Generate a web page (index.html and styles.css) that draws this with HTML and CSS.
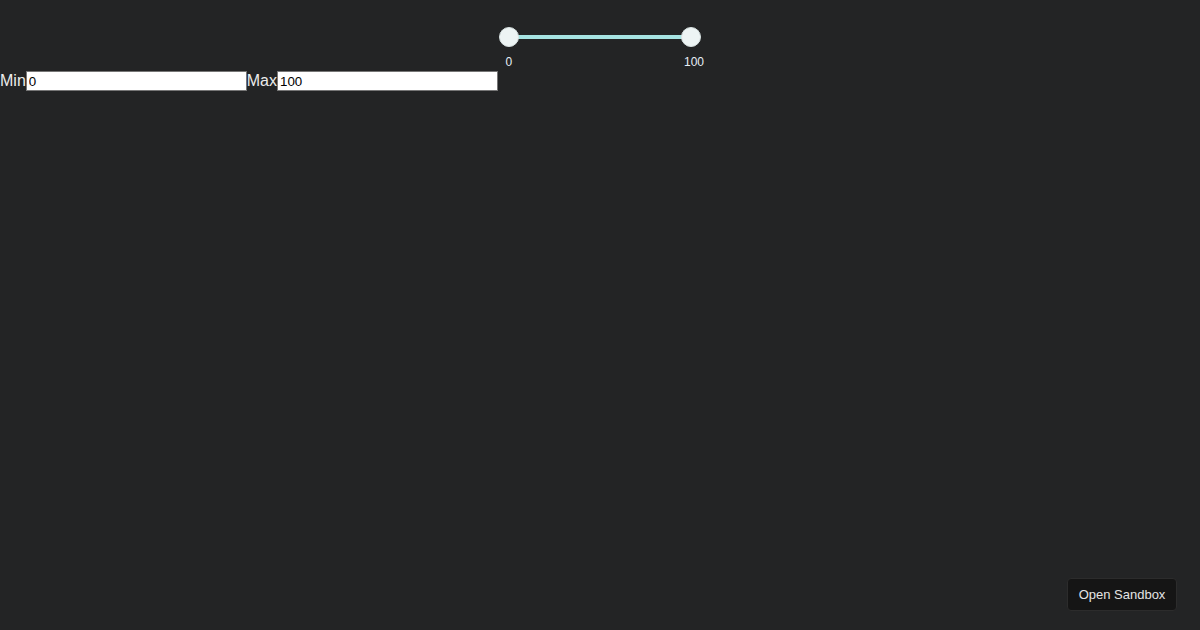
FILE: index.html
```html
<!DOCTYPE html>
<html>
<head>
<meta charset="utf-8">
<link rel="stylesheet" href="styles.css">
</head>
<body>
<div class="slider">
  <div class="slider-rail">
    <div class="track"></div>
    <span class="thumb thumb-min"></span>
    <span class="thumb thumb-max"></span>
  </div>
  <div class="slider-labels"><span>0</span><span>100</span></div>
</div>
<div class="fields"><label class="field-label">Min</label><input class="field-input" type="text" value="0"><label class="field-label">Max</label><input class="field-input" type="text" value="100"></div>
<button class="sandbox-btn">Open Sandbox</button>
</body>
</html>
```
FILE: styles.css
```css
html, body {
  margin: 0;
  padding: 0;
  background: #232425;
  height: 100%;
  font-family: "Liberation Sans", Arial, sans-serif;
}
.slider {
  width: 202px;
  margin: 0 auto;
  padding-top: 27px;
}
.slider-rail {
  position: relative;
  height: 20px;
}
.track {
  position: absolute;
  left: 10px;
  right: 10px;
  top: 8px;
  height: 4px;
  background: #a6e4e2;
}
.thumb {
  position: absolute;
  top: 0;
  width: 20px;
  height: 20px;
  border-radius: 50%;
  background: #edf4f4;
  box-sizing: border-box;
  border: 1px solid #d8e2e2;
}
.thumb-min { left: 0; }
.thumb-max { right: 0; }
.slider-labels {
  display: flex;
  justify-content: space-between;
  margin: 8px -3px 0 6.5px;
  font-size: 12px;
  line-height: 14px;
  color: #e6eef6;
}
.fields {
  display: flex;
  align-items: center;
  margin-top: 2px;
  height: 20px;
}
.field-label {
  font-size: 16px;
  color: #ececec;
  line-height: 20px;
}
.field-input {
  box-sizing: border-box;
  width: 221px;
  height: 20px;
  margin: 0;
  padding: 1px 2px;
  border: 1px solid #767676;
  border-radius: 0;
  background: #fff;
  color: #000;
  font-family: "Liberation Sans", Arial, sans-serif;
  font-size: 13.33px;
  outline: none;
}
.sandbox-btn {
  position: fixed;
  right: 23px;
  bottom: 19px;
  width: 110px;
  height: 33px;
  box-sizing: border-box;
  background: #151515;
  border: 1px solid #2c2c2c;
  border-radius: 4px;
  color: #e4e4e4;
  font-family: "Liberation Sans", Arial, sans-serif;
  font-size: 13px;
  padding: 0;
  cursor: pointer;
}
```
